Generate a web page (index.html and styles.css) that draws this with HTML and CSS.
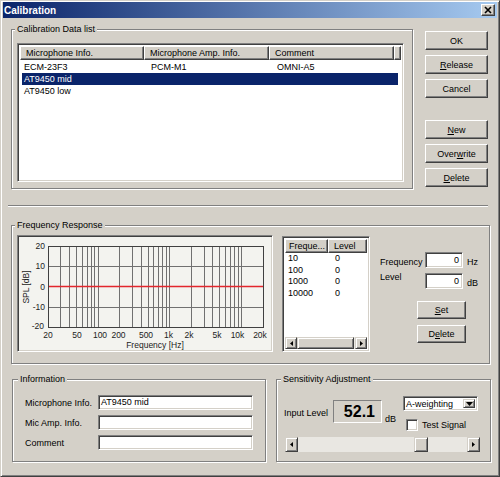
FILE: index.html
```html
<!DOCTYPE html>
<html lang="en">
<head>
  <meta charset="UTF-8">
  <title>Calibration</title>
  <link rel="stylesheet" href="styles.css">
</head>
<body>
<div class="window">
  <div class="titlebar">
    <span class="title">Calibration</span>
    <span class="close-btn">
      <svg width="12" height="10" viewBox="0 0 12 10"><path d="M3 2 L9 8 M9 2 L3 8" stroke="#000" stroke-width="1.6"/></svg>
    </span>
  </div>

  <div class="client">
    <div class="top-row">
      <fieldset class="group data-group">
        <legend>Calibration Data list</legend>
        <div class="group-body">
          <div class="listview data-list">
            <div class="lv-header">
              <div class="lv-col d1">Microphone Info.</div>
              <div class="lv-col d2">Microphone Amp. Info.</div>
              <div class="lv-col d3">Comment</div>
              <div class="lv-col filler"></div>
            </div>
            <div class="lv-body">
              <div class="lv-row"><span class="d1">ECM-23F3</span><span class="d2">PCM-M1</span><span class="d3">OMNI-A5</span></div>
              <div class="lv-row selected"><span class="d1">AT9450 mid</span><span class="d2"></span><span class="d3"></span></div>
              <div class="lv-row"><span class="d1">AT9450 low</span><span class="d2"></span><span class="d3"></span></div>
            </div>
          </div>
        </div>
      </fieldset>

      <div class="btn-col">
        <button class="btn">OK</button>
        <button class="btn"><u>R</u>elease</button>
        <button class="btn">Cancel</button>
        <button class="btn btn-new"><u>N</u>ew</button>
        <button class="btn">Over<u>w</u>rite</button>
        <button class="btn"><u>D</u>elete</button>
      </div>
    </div>

    <div class="separator"></div>

    <fieldset class="group freq-group">
      <legend>Frequency Response</legend>
      <div class="group-body freq-body">
        <div class="chart">
          <svg width="252" height="113" viewBox="0 0 252 113">
            <g stroke="#707070" stroke-width="1">
              <line x1="41.5" y1="9.5" x2="41.5" y2="90.5"/>
              <line x1="50.5" y1="9.5" x2="50.5" y2="90.5"/>
              <line x1="57.5" y1="9.5" x2="57.5" y2="90.5"/>
              <line x1="63.5" y1="9.5" x2="63.5" y2="90.5"/>
              <line x1="68.5" y1="9.5" x2="68.5" y2="90.5"/>
              <line x1="72.5" y1="9.5" x2="72.5" y2="90.5"/>
              <line x1="75.5" y1="9.5" x2="75.5" y2="90.5"/>
              <line x1="79.5" y1="9.5" x2="79.5" y2="90.5"/>
              <line x1="100.5" y1="9.5" x2="100.5" y2="90.5"/>
              <line x1="113.5" y1="9.5" x2="113.5" y2="90.5"/>
              <line x1="122.5" y1="9.5" x2="122.5" y2="90.5"/>
              <line x1="129.5" y1="9.5" x2="129.5" y2="90.5"/>
              <line x1="134.5" y1="9.5" x2="134.5" y2="90.5"/>
              <line x1="139.5" y1="9.5" x2="139.5" y2="90.5"/>
              <line x1="143.5" y1="9.5" x2="143.5" y2="90.5"/>
              <line x1="147.5" y1="9.5" x2="147.5" y2="90.5"/>
              <line x1="150.5" y1="9.5" x2="150.5" y2="90.5"/>
              <line x1="172.5" y1="9.5" x2="172.5" y2="90.5"/>
              <line x1="185.5" y1="9.5" x2="185.5" y2="90.5"/>
              <line x1="193.5" y1="9.5" x2="193.5" y2="90.5"/>
              <line x1="200.5" y1="9.5" x2="200.5" y2="90.5"/>
              <line x1="206.5" y1="9.5" x2="206.5" y2="90.5"/>
              <line x1="211.5" y1="9.5" x2="211.5" y2="90.5"/>
              <line x1="215.5" y1="9.5" x2="215.5" y2="90.5"/>
              <line x1="219.5" y1="9.5" x2="219.5" y2="90.5"/>
              <line x1="222.5" y1="9.5" x2="222.5" y2="90.5"/>
              <line x1="29.5" y1="29.5" x2="244.5" y2="29.5"/>
              <line x1="29.5" y1="70.5" x2="244.5" y2="70.5"/>
            </g>
            <rect x="29.5" y="9.5" width="215" height="81" fill="none" stroke="#404040"/>
            <line x1="30" y1="49.5" x2="244" y2="49.5" stroke="#e3262c" stroke-width="1.6"/>
            <g class="axis-text" text-anchor="end">
              <text x="26" y="12">20</text>
              <text x="26" y="32">10</text>
              <text x="26" y="52.5">0</text>
              <text x="26" y="73">-10</text>
              <text x="25" y="92">-20</text>
            </g>
            <g class="axis-text" text-anchor="middle">
              <text x="29" y="101">20</text>
              <text x="58" y="101">50</text>
              <text x="81" y="101">100</text>
              <text x="99.5" y="101">200</text>
              <text x="127" y="101">500</text>
              <text x="149.5" y="101">1k</text>
              <text x="170" y="101">2k</text>
              <text x="198" y="101">5k</text>
              <text x="218.5" y="101">10k</text>
              <text x="241" y="101">20k</text>
              <text x="136" y="111">Frequency [Hz]</text>
              <text transform="translate(10 50) rotate(-90)">SPL [dB]</text>
            </g>
          </svg>
        </div>

        <div class="listview freq-list">
          <div class="lv-header">
            <div class="lv-col f1">Freque...</div>
            <div class="lv-col f2">Level</div>
          </div>
          <div class="lv-body">
            <div class="lv-row"><span class="f1">10</span><span class="f2">0</span></div>
            <div class="lv-row"><span class="f1">100</span><span class="f2">0</span></div>
            <div class="lv-row"><span class="f1">1000</span><span class="f2">0</span></div>
            <div class="lv-row"><span class="f1">10000</span><span class="f2">0</span></div>
          </div>
          <div class="hscroll list-scroll">
            <span class="sb-btn"><svg width="3" height="5" viewBox="0 0 3 5"><polygon points="3,0 0,2.5 3,5"/></svg></span>
            <span class="sb-thumb list-thumb"></span>
            <span class="sb-track"></span>
            <span class="sb-btn"><svg width="3" height="5" viewBox="0 0 3 5"><polygon points="0,0 3,2.5 0,5"/></svg></span>
          </div>
        </div>

        <div class="fr-controls">
          <div class="field-row">
            <span class="field-label">Frequency</span>
            <span class="edit num">0</span>
            <span class="unit">Hz</span>
          </div>
          <div class="field-row level-row">
            <span class="field-label">Level</span>
            <span class="edit num">0</span>
            <span class="unit">dB</span>
          </div>
          <button class="btn small set-btn"><u>S</u>et</button>
          <button class="btn small">D<u>e</u>lete</button>
        </div>
      </div>
    </fieldset>

    <div class="bottom-row">
      <fieldset class="group info-group">
        <legend>Information</legend>
        <div class="group-body info-body">
          <div class="info-row">
            <span class="info-label">Microphone Info.</span>
            <span class="edit text">AT9450 mid</span>
          </div>
          <div class="info-row">
            <span class="info-label">Mic Amp. Info.</span>
            <span class="edit text"></span>
          </div>
          <div class="info-row">
            <span class="info-label">Comment</span>
            <span class="edit text"></span>
          </div>
        </div>
      </fieldset>

      <fieldset class="group sens-group">
        <legend>Sensitivity Adjustment</legend>
        <div class="group-body sens-body">
          <div class="sens-row">
            <span class="sens-label">Input Level</span>
            <span class="level-display">52.1</span>
            <span class="sens-unit">dB</span>
            <div class="sens-opts">
              <div class="combo">
                <span class="combo-text">A-weighting</span>
                <span class="combo-btn"><svg width="7" height="4" viewBox="0 0 7 4"><polygon points="0,0 7,0 3.5,4"/></svg></span>
              </div>
              <label class="check"><span class="check-box"></span>Test Signal</label>
            </div>
          </div>
          <div class="hscroll sens-scroll">
            <span class="sb-btn"><svg width="3" height="5" viewBox="0 0 3 5"><polygon points="3,0 0,2.5 3,5"/></svg></span>
            <span class="sb-track sens-track-left"></span>
            <span class="sb-thumb sens-thumb"></span>
            <span class="sb-track"></span>
            <span class="sb-btn"><svg width="3" height="5" viewBox="0 0 3 5"><polygon points="0,0 3,2.5 0,5"/></svg></span>
          </div>
        </div>
      </fieldset>
    </div>
  </div>
</div>
</body>
</html>
```

FILE: styles.css
```css
* {
  box-sizing: border-box;
}

body {
  margin: 0;
  background: #d4d0c8;
  font-family: "Liberation Sans", Arial, sans-serif;
  font-size: 9px;
  color: #000;
}

.window {
  width: 500px;
  height: 477px;
  background: #d4d0c8;
  border: 1px solid;
  border-color: #d4d0c8 #404040 #404040 #d4d0c8;
  box-shadow: inset 1px 1px #fff, inset -1px -1px #808080;
  padding: 1px 2px 2px 2px;
  overflow: hidden;
}

.titlebar {
  height: 16px;
  background: linear-gradient(to right, #0a246a, #a6caf0);
  display: flex;
  align-items: center;
  justify-content: space-between;
  padding: 0 2px 0 1px;
}

.title {
  color: #fff;
  font-weight: bold;
  font-size: 10px;
}

.close-btn {
  width: 14px;
  height: 12px;
  display: flex;
  align-items: center;
  justify-content: center;
  background: #d4d0c8;
  border: 1px solid;
  border-color: #fff #404040 #404040 #fff;
  box-shadow: inset -1px -1px #808080;
}

/* shared win2k bits */
.btn {
  display: block;
  width: 63px;
  height: 19px;
  padding: 0;
  font: 9px "Liberation Sans", Arial, sans-serif;
  color: #000;
  background: #d4d0c8;
  border: 1px solid;
  border-color: #fff #404040 #404040 #fff;
  box-shadow: inset -1px -1px #808080;
}

.btn u {
  text-underline-offset: 1px;
}

.listview,
.edit,
.chart,
.combo,
.check-box {
  border: 1px solid;
  border-color: #808080 #fff #fff #808080;
  box-shadow: inset 1px 1px #404040, inset -1px -1px #d4d0c8;
}

.group {
  margin: 0;
  padding: 0;
  min-width: 0;
  border: 1px solid #808080;
  box-shadow: inset 1px 1px #fff, 1px 1px #fff;
}

.group legend {
  padding: 0 2px;
  margin-left: 3px;
  line-height: 11px;
  background: #d4d0c8;
}

/* top part */
.top-row {
  display: flex;
  align-items: flex-start;
  margin-top: 6px;
}

.data-group {
  margin-left: 8px;
  width: 402px;
}

.data-group .group-body {
  padding: 8px 8px 6px 5px;
}

.data-list {
  width: 387px;
  height: 139px;
  background: #fff;
  padding: 2px;
  display: flex;
  flex-direction: column;
}

.lv-header {
  display: flex;
  height: 14px;
  flex: none;
}

.lv-col {
  height: 14px;
  line-height: 12px;
  white-space: nowrap;
  overflow: hidden;
  background: #d4d0c8;
  border: 1px solid;
  border-color: #fff #404040 #404040 #fff;
  box-shadow: inset -1px -1px #808080;
}

.data-list .lv-col {
  padding-left: 5px;
}

.lv-col.d1 { width: 125px; }
.lv-col.d2 { width: 126px; }
.lv-col.d3 { width: 126px; }
.lv-col.filler { flex: 1; }

.lv-body {
  flex: 1;
}

.data-list .lv-body {
  padding: 1px 0 0 2px;
}

.lv-row {
  display: flex;
  white-space: nowrap;
}

.data-list .lv-row {
  width: 376px;
  height: 12px;
  line-height: 12px;
}

.data-list .lv-row span {
  overflow: hidden;
}

.lv-row .d1 { width: 123px; padding-left: 2px; }
.lv-row .d2 { width: 126px; padding-left: 6px; }
.lv-row .d3 { width: 127px; padding-left: 6px; }

.lv-row.selected {
  background: #0a246a;
  color: #fff;
}

.btn-col {
  margin-left: 12px;
  margin-top: 7px;
  display: flex;
  flex-direction: column;
  gap: 5px;
}

.btn-new {
  margin-top: 17px;
}

.separator {
  margin: 16px 0 0 5px;
  width: 480px;
  height: 2px;
  border-top: 1px solid #808080;
  border-bottom: 1px solid #fff;
}

/* frequency response */
.freq-group {
  margin: 13px 0 0 8px;
  width: 479px;
}

.freq-body {
  display: flex;
  align-items: flex-start;
  padding: 4px 0 11px 5px;
}

.chart {
  width: 256px;
  height: 117px;
  background: #f3f3ef;
  padding: 1px;
}

.chart svg {
  display: block;
}

.axis-text {
  font-family: "Liberation Sans", Arial, sans-serif;
  font-size: 8.5px;
  fill: #222;
}

.freq-list {
  margin: 1px 0 0 9px;
  width: 88px;
  height: 116px;
  background: #fff;
  padding: 2px;
  display: flex;
  flex-direction: column;
}

.lv-col.f1 { width: 44px; padding-left: 3px; }
.lv-col.f2 { width: 40px; padding-left: 5px; }

.freq-list .lv-row {
  height: 11.7px;
  line-height: 11.7px;
}

.lv-row .f1 { width: 44px; padding-left: 3px; }
.lv-row .f2 { padding-left: 6px; }

.hscroll {
  display: flex;
  flex: none;
}

.list-scroll {
  height: 12px;
}

.sb-btn,
.sb-thumb {
  flex: none;
  display: flex;
  align-items: center;
  justify-content: center;
  width: 12px;
  background: #d4d0c8;
  border: 1px solid;
  border-color: #d4d0c8 #404040 #404040 #d4d0c8;
  box-shadow: inset 1px 1px #fff, inset -1px -1px #808080;
}

.sb-track {
  flex: 1;
  background: #e9e7e2;
}

.list-thumb {
  width: 57px;
}

.fr-controls {
  margin-left: 10px;
  display: flex;
  flex-direction: column;
  align-items: flex-start;
}

.field-row {
  display: flex;
  align-items: flex-start;
  height: 16px;
  margin-top: 17px;
}

.field-label {
  width: 45px;
  line-height: 11px;
  padding-top: 5px;
}

.level-row {
  margin-top: 5px;
}

.level-row .field-label {
  padding-top: 0;
  margin-top: -1px;
}

.edit {
  background: #fff;
  white-space: nowrap;
  overflow: hidden;
}

.edit.num {
  width: 38px;
  height: 16px;
  line-height: 14px;
  text-align: right;
  padding-right: 3px;
}

.unit {
  margin-left: 4px;
  line-height: 11px;
  padding-top: 5px;
}

.btn.small {
  width: 49px;
  height: 18px;
  margin-left: 37px;
  margin-top: 6px;
}

.btn.set-btn {
  margin-top: 12px;
}

/* bottom part */
.bottom-row {
  display: flex;
  align-items: flex-start;
  margin: 10px 0 0 9px;
  gap: 10px;
}

.info-group {
  width: 254px;
}

.info-group legend {
  margin-left: 5px;
}

.info-body {
  padding: 10px 12px 11px 12px;
  display: flex;
  flex-direction: column;
  gap: 5px;
}

.info-row {
  display: flex;
  height: 15px;
}

.info-label {
  width: 73px;
  white-space: nowrap;
  line-height: 11px;
  padding-top: 3px;
}

.edit.text {
  width: 155px;
  height: 15px;
  line-height: 13px;
  padding-left: 2px;
}

.sens-group {
  width: 215px;
}

.sens-group legend {
  margin-left: 4px;
}

.sens-body {
  padding: 11px 10px 9px 7px;
}

.sens-row {
  display: flex;
  align-items: flex-start;
  height: 35px;
}

.sens-label {
  width: 49px;
  white-space: nowrap;
  line-height: 11px;
  margin-top: 12px;
}

.level-display {
  width: 49px;
  height: 23px;
  margin-top: 4px;
  border: 1px solid;
  border-color: #808080 #fff #fff #808080;
  font-size: 16px;
  font-weight: bold;
  line-height: 21px;
  text-align: right;
  padding-right: 6px;
}

.sens-unit {
  width: 21px;
  padding-left: 3px;
  line-height: 11px;
  margin-top: 18px;
}

.sens-opts {
  width: 75px;
  display: flex;
  flex-direction: column;
}

.combo {
  height: 15px;
  background: #fff;
  display: flex;
  align-items: stretch;
  padding: 2px;
}

.combo-text {
  flex: 1;
  line-height: 11px;
  white-space: nowrap;
  padding-left: 0;
}

.combo-btn {
  width: 12px;
  display: flex;
  align-items: center;
  justify-content: center;
  background: #d4d0c8;
  border: 1px solid;
  border-color: #d4d0c8 #404040 #404040 #d4d0c8;
  box-shadow: inset 1px 1px #fff, inset -1px -1px #808080;
}

.check {
  display: flex;
  align-items: center;
  margin-top: 8px;
  height: 12px;
  white-space: nowrap;
}

.check-box {
  width: 12px;
  height: 12px;
  margin: 0 4px 0 3px;
  background: #fff;
}

.sens-scroll {
  margin: 6px 0 0 1px;
  width: 195px;
  height: 15px;
}

.sens-scroll .sb-btn {
  width: 13px;
}

.sens-track-left {
  flex: none;
  width: 116px;
}

.sens-thumb {
  width: 14px;
}
```
